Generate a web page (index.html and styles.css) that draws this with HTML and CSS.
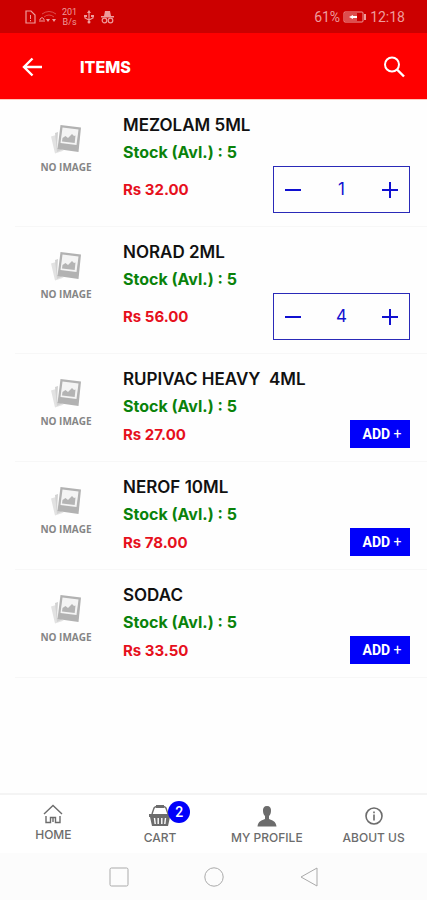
FILE: index.html
```html
<!DOCTYPE html>
<html lang="en">
<head>
    <meta charset="UTF-8">
    <meta name="viewport" content="width=device-width, initial-scale=1.0">
    <title>Items</title>
    <link rel="stylesheet" href="styles.css">
</head>
<body>

<!-- shared drawings -->
<svg class="defs" aria-hidden="true">
    <symbol id="no-image" viewBox="0 0 32 30">
        <path d="M1 12.500l5-1.500 2 14 6 1.500-9 3z" fill="#e2e2e2"/>
        <path d="M5 9l3-1-1 16 6 1-6 3z" fill="#d2d2d2"/>
        <path d="M10.500 1L31 3.500 28.500 28 7.500 25z" fill="#b2b2b2"/>
        <path d="M12.500 3.500L28.500 5.500 26.500 21 10.500 19z" fill="#f4f4f4"/>
        <path d="M12 17.500l.5-3.500 3-2 2.500 2 4-4 2 2 1.500-.5-.8 7.500z" fill="#b4b4b4"/>
    </symbol>
    <symbol id="minus" viewBox="0 0 18 18">
        <path d="M1 9h16" stroke="currentColor" stroke-width="2"/>
    </symbol>
    <symbol id="plus" viewBox="0 0 18 18">
        <path d="M1 9h16M9 1v16" stroke="currentColor" stroke-width="2"/>
    </symbol>
</svg>

<div class="status-bar">
    <div class="status-left">
        <svg width="11" height="14" viewBox="0 0 11 14"><path d="M1 1h5l4 4v8H1z" fill="none" stroke="currentColor" stroke-width="1.200"/><path d="M5.500 5v4M5.500 10v1.300" stroke="currentColor"/></svg>
        <svg width="18" height="13" viewBox="0 0 18 13"><path d="M3 4q7-5 14 0M5 7q5-4 10 0" fill="none" stroke="currentColor" opacity=".5"/><path d="M1 12V9q2-3 4 0v3M3 12v-2" fill="none" stroke="currentColor"/><path d="M7 9h4l-2 3zM13 9h4l-2 3z" fill="currentColor"/></svg>
        <span class="speed">201<br>B/s</span>
        <svg width="10" height="14" viewBox="0 0 10 14"><path d="M5 2v10M1 6v2l4 2 4-2V6" fill="none" stroke="currentColor" stroke-width="1.200"/><path d="M5 0l2 3H3z" fill="currentColor"/><circle cx="5" cy="12" r="1.500" fill="currentColor"/><path d="M0 5h3v2H0zM7 5h3v2H7z" fill="currentColor"/></svg>
        <svg width="13" height="14" viewBox="0 0 13 14"><path d="M3 6l1-5h5l1 5zM0 6h13v1.500H0z" fill="currentColor"/><circle cx="3.500" cy="10.500" r="2.300" fill="none" stroke="currentColor" stroke-width="1.200"/><circle cx="9.500" cy="10.500" r="2.300" fill="none" stroke="currentColor" stroke-width="1.200"/></svg>
    </div>
    <div class="status-right">
        <span>61%</span>
        <svg width="24" height="12" viewBox="0 0 24 12"><rect x="1" y="1" width="19" height="10" rx="1" fill="none" stroke="currentColor"/><path d="M2 2h12v8H2z" fill="currentColor" opacity=".5"/><path d="M6 6l4-2v1h4v2h-4v1z" fill="#fff"/><path d="M22 3v6" stroke="currentColor" stroke-width="2"/></svg>
        <span>12:18</span>
    </div>
</div>

<header class="header">
    <button class="icon-btn" aria-label="Back">
        <svg width="20" height="20" viewBox="0 0 20 20"><path d="M20 10H2M10.500 1.500L2 10l8.500 8.500" fill="none" stroke="currentColor" stroke-width="2.400"/></svg>
    </button>
    <h1>ITEMS</h1>
    <button class="icon-btn" aria-label="Search">
        <svg width="22" height="22" viewBox="0 0 22 22"><circle cx="9" cy="8.500" r="7" fill="none" stroke="currentColor" stroke-width="2"/><path d="M14 13.500l7 7" stroke="currentColor" stroke-width="2.400"/></svg>
    </button>
</header>

<main class="items">
    <div class="item">
        <div class="thumb"><svg width="32" height="30"><use href="#no-image"/></svg><span>NO IMAGE</span></div>
        <div class="info">
            <h2>MEZOLAM 5ML</h2>
            <p class="stock">Stock (Avl.) : 5</p>
            <div class="bottom">
                <span class="price">Rs 32.00</span>
                <div class="stepper">
                    <button aria-label="Decrease"><svg width="18" height="18"><use href="#minus"/></svg></button>
                    <span class="qty">1</span>
                    <button aria-label="Increase"><svg width="18" height="18"><use href="#plus"/></svg></button>
                </div>
            </div>
        </div>
    </div>
    <div class="item">
        <div class="thumb"><svg width="32" height="30"><use href="#no-image"/></svg><span>NO IMAGE</span></div>
        <div class="info">
            <h2>NORAD 2ML</h2>
            <p class="stock">Stock (Avl.) : 5</p>
            <div class="bottom">
                <span class="price">Rs 56.00</span>
                <div class="stepper">
                    <button aria-label="Decrease"><svg width="18" height="18"><use href="#minus"/></svg></button>
                    <span class="qty">4</span>
                    <button aria-label="Increase"><svg width="18" height="18"><use href="#plus"/></svg></button>
                </div>
            </div>
        </div>
    </div>
    <div class="item">
        <div class="thumb"><svg width="32" height="30"><use href="#no-image"/></svg><span>NO IMAGE</span></div>
        <div class="info">
            <h2>RUPIVAC HEAVY&nbsp; 4ML</h2>
            <p class="stock">Stock (Avl.) : 5</p>
            <div class="bottom">
                <span class="price">Rs 27.00</span>
                <button class="add">ADD <span>+</span></button>
            </div>
        </div>
    </div>
    <div class="item">
        <div class="thumb"><svg width="32" height="30"><use href="#no-image"/></svg><span>NO IMAGE</span></div>
        <div class="info">
            <h2>NEROF 10ML</h2>
            <p class="stock">Stock (Avl.) : 5</p>
            <div class="bottom">
                <span class="price">Rs 78.00</span>
                <button class="add">ADD <span>+</span></button>
            </div>
        </div>
    </div>
    <div class="item">
        <div class="thumb"><svg width="32" height="30"><use href="#no-image"/></svg><span>NO IMAGE</span></div>
        <div class="info">
            <h2>SODAC</h2>
            <p class="stock">Stock (Avl.) : 5</p>
            <div class="bottom">
                <span class="price">Rs 33.50</span>
                <button class="add">ADD <span>+</span></button>
            </div>
        </div>
    </div>
</main>

<nav class="tabs">
    <a href="#" class="tab">
        <svg width="20" height="20" viewBox="0 0 20 20"><path d="M1 10L10 1.500l9 8.500M3 12v6.500h4.500v-5h5v5H17V12M10 13v5" fill="none" stroke="currentColor" stroke-width="1.400"/></svg>
        <span>HOME</span>
    </a>
    <a href="#" class="tab">
        <span class="cart-icon">
            <svg width="24" height="23" viewBox="0 0 24 23"><path d="M4 10l2-6q1-1.500 3-1.500h6q2 0 3 1.500l2 6" fill="none" stroke="currentColor" stroke-width="1.400"/><path d="M8 1h8v3H8z" fill="currentColor"/><path d="M1 10h22v3h-1l-2 9H4l-2-9H1z" fill="currentColor"/><path d="M6.500 14l.7 6M10.200 14v6M13.800 14v6M17.500 14l-.7 6" stroke="#fff" stroke-width="1.400"/></svg>
            <span class="badge">2</span>
        </span>
        <span>CART</span>
    </a>
    <a href="#" class="tab">
        <svg width="22" height="23" viewBox="0 0 22 23"><path d="M11 2c3 0 4.300 2 4 5-.2 3-1 4-2 5v3c3 1.500 7 2 7.500 7.500h-19C2 17 6 16.500 9 15v-3c-1-1-1.800-2-2-5-.3-3 1-5 4-5z" fill="currentColor"/></svg>
        <span>MY PROFILE</span>
    </a>
    <a href="#" class="tab">
        <svg width="20" height="23" viewBox="0 0 20 23"><circle cx="10" cy="12" r="8" fill="none" stroke="currentColor" stroke-width="1.600"/><path d="M10 10.500v6M10 7.500v1.800" stroke="currentColor" stroke-width="1.600"/></svg>
        <span>ABOUT US</span>
    </a>
</nav>

<div class="system-bar">
    <button class="sys-btn" aria-label="Recent apps"><svg width="20" height="20" viewBox="0 0 20 20"><rect x="1" y="1" width="18" height="18" rx="1.500"/></svg></button>
    <button class="sys-btn" aria-label="Home screen"><svg width="20" height="20" viewBox="0 0 20 20"><circle cx="10" cy="10" r="9.200"/></svg></button>
    <button class="sys-btn" aria-label="System back"><svg width="20" height="20" viewBox="0 0 20 20"><path d="M18 1v18L2 10z"/></svg></button>
</div>

</body>
</html>
```
FILE: styles.css
```css
* {
    box-sizing: border-box;
}
body {
    display: flex;
    flex-direction: column;
    min-height: 100vh;
    margin: 0;
    background-color: #fefefe;
    font-family: Inter, "Open Sans", sans-serif;
}
button {
    border: none;
    padding: 0;
    background: none;
    color: inherit;
    cursor: pointer;
}
svg {
    display: block;
}
.defs {
    display: none;
}
.status-bar {
    display: flex;
    justify-content: space-between;
    align-items: center;
    height: 33px;
    padding: 0 22px 0 25px;
    background-color: #cc0000;
    color: #ee9c9c;
    font-family: Roboto, sans-serif;
    font-size: 14px;
}
.status-left {
    display: flex;
    align-items: center;
    gap: 3px;
}
.status-left svg:nth-of-type(n+3) {
    margin-left: 4px;
}
.speed {
    padding-left: 2px;
    font-size: 9px;
    line-height: 10px;
    text-align: center;
}
.status-right {
    display: flex;
    align-items: center;
    gap: 3px;
}
.header {
    display: flex;
    align-items: center;
    height: 67px;
    padding: 2px 22px 0;
    background-color: #ff0000;
    border-bottom: 1px solid #ffc9bd;
    color: white;
}
.header h1 {
    flex: 1;
    margin: 0;
    padding-left: 38px;
    font-size: 16px;
    font-weight: 800;
}
.items {
    flex: 1;
    padding-left: 15px;
}
.item {
    display: flex;
    padding: 12px 17px 13px 0;
    border-bottom: 1px solid #f7f7f7;
}
.thumb {
    display: flex;
    flex-direction: column;
    align-items: center;
    width: 102px;
    padding-top: 12px;
    gap: 6px;
    color: #858585;
    font-family: "Open Sans", sans-serif;
    font-size: 10px;
    font-weight: 700;
    line-height: 14px;
}
.info {
    flex: 1;
    padding-left: 6px;
}
.info h2,
.stock {
    margin: 0;
    line-height: 27px;
}
.info h2 {
    font-size: 17px;
    font-weight: 600;
    color: #111;
}
.stock {
    font-size: 16px;
    font-weight: 700;
    color: #0a820a;
}
.bottom {
    display: flex;
    justify-content: space-between;
    align-items: center;
}
.price {
    font-size: 15px;
    font-weight: 700;
    color: #e6101c;
}
.stepper {
    display: flex;
    align-items: center;
    justify-content: space-between;
    width: 137px;
    height: 47px;
    padding: 0 10px;
    border: 1px solid #2a2ab8;
    color: #1010d0;
}
.qty {
    padding-bottom: 2px;
    font-size: 17px;
}
.add {
    width: 60px;
    height: 28px;
    background-color: #0000fa;
    color: white;
    font-family: Roboto, sans-serif;
    font-size: 14px;
    font-weight: 700;
    padding-left: 4px;
}
.add span {
    font-weight: 400;
}
.tabs {
    display: flex;
    height: 60px;
    padding-top: 9px;
    border-top: 2px solid #f4f4f4;
    background-color: white;
}
.tab {
    display: flex;
    flex: 1;
    flex-direction: column;
    align-items: center;
    color: #6c6c6c;
    font-size: 12px;
    font-weight: 500;
    line-height: 21px;
    text-decoration: none;
    white-space: nowrap;
}
.cart-icon {
    position: relative;
}
.badge {
    position: absolute;
    top: -3px;
    left: 20px;
    width: 22px;
    height: 22px;
    border-radius: 50%;
    background-color: #0000fa;
    color: white;
    font-family: Roboto, sans-serif;
    font-size: 14px;
    line-height: 22px;
    text-align: center;
}
.system-bar {
    display: flex;
    justify-content: center;
    align-items: center;
    gap: 75px;
    height: 47px;
    background-color: #fcfcfc;
}
.sys-btn svg {
    fill: none;
    stroke: #aaa;
    stroke-width: 1px;
}
```
